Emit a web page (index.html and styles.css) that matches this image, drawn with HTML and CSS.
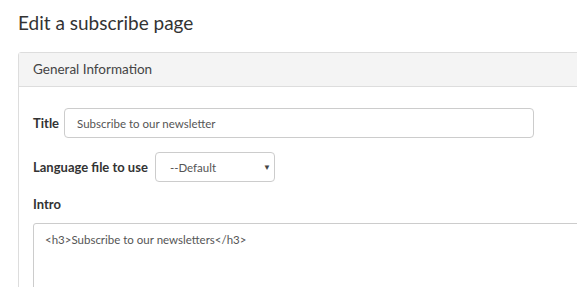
FILE: index.html
```html
<!DOCTYPE html>
<html lang="en">
<head>
    <meta charset="UTF-8">
    <title>Edit a subscribe page</title>
    <link rel="stylesheet" href="styles.css">
</head>
<body>
    <div class="page">
        <h1 class="page-title">Edit a subscribe page</h1>
        <div class="panel">
            <div class="panel-heading">General Information</div>
            <div class="panel-body">
                <div class="form-row">
                    <label for="title">Title</label>
                    <input type="text" id="title" class="input-field title-field" value="Subscribe to our newsletter">
                </div>
                <div class="form-row">
                    <label for="language">Language file to use</label>
                    <div class="select-wrap">
                        <select id="language" class="input-field select-field">
                            <option>--Default</option>
                        </select>
                        <span class="caret">&#9660;</span>
                    </div>
                </div>
                <label for="intro" class="block-label">Intro</label>
                <textarea id="intro" class="input-field intro-field">&lt;h3&gt;Subscribe to our newsletters&lt;/h3&gt;</textarea>
            </div>
        </div>
    </div>
</body>
</html>
```

FILE: styles.css
```css
html, body {
    margin: 0;
    padding: 0;
    overflow: hidden;
    background: #fff;
}

body {
    font-family: Lato, "Open Sans", sans-serif;
    color: #333;
}

.page {
    padding-left: 18px;
    height: 287px;
    overflow: hidden;
}

.page-title {
    margin: 0;
    padding-top: 11px;
    font-size: 19px;
    line-height: 24px;
    font-weight: normal;
    color: #333;
}

/* panel ============================================================ */

.panel {
    width: 600px;
    margin-top: 17px;
    border: 1px solid #ddd;
    border-radius: 3px;
}

.panel-heading {
    height: 33px;
    line-height: 33px;
    padding: 0 14px;
    background-color: #f4f4f4;
    border-bottom: 1px solid #ddd;
    font-size: 13.5px;
    color: #444;
}

.panel-body {
    padding: 21px 14px 20px;
}

.form-row {
    display: flex;
    align-items: center;
    gap: 5px;
    margin-bottom: 14px;
}

.form-row label,
.block-label {
    font-size: 13px;
    font-weight: bold;
    color: #333;
}

.block-label {
    display: block;
    margin: 8px 0 11px;
}

.input-field {
    box-sizing: border-box;
    height: 30px;
    padding: 0 12px;
    border: 1px solid #ccc;
    border-radius: 4px;
    background: #fff;
    font-family: Lato, "Open Sans", sans-serif;
    font-size: 11.5px;
    color: #555;
}

.title-field {
    width: 470px;
}

.select-wrap {
    position: relative;
    margin-left: 2px;
}

.select-field {
    appearance: none;
    -webkit-appearance: none;
    width: 120px;
    padding-left: 14px;
}

.caret {
    position: absolute;
    right: 4px;
    top: 10px;
    font-size: 8px;
    color: #444;
    pointer-events: none;
}

.intro-field {
    display: block;
    width: 580px;
    height: 100px;
    padding: 9px 11px;
    resize: none;
    border-radius: 3px 0 0 3px;
}
```
